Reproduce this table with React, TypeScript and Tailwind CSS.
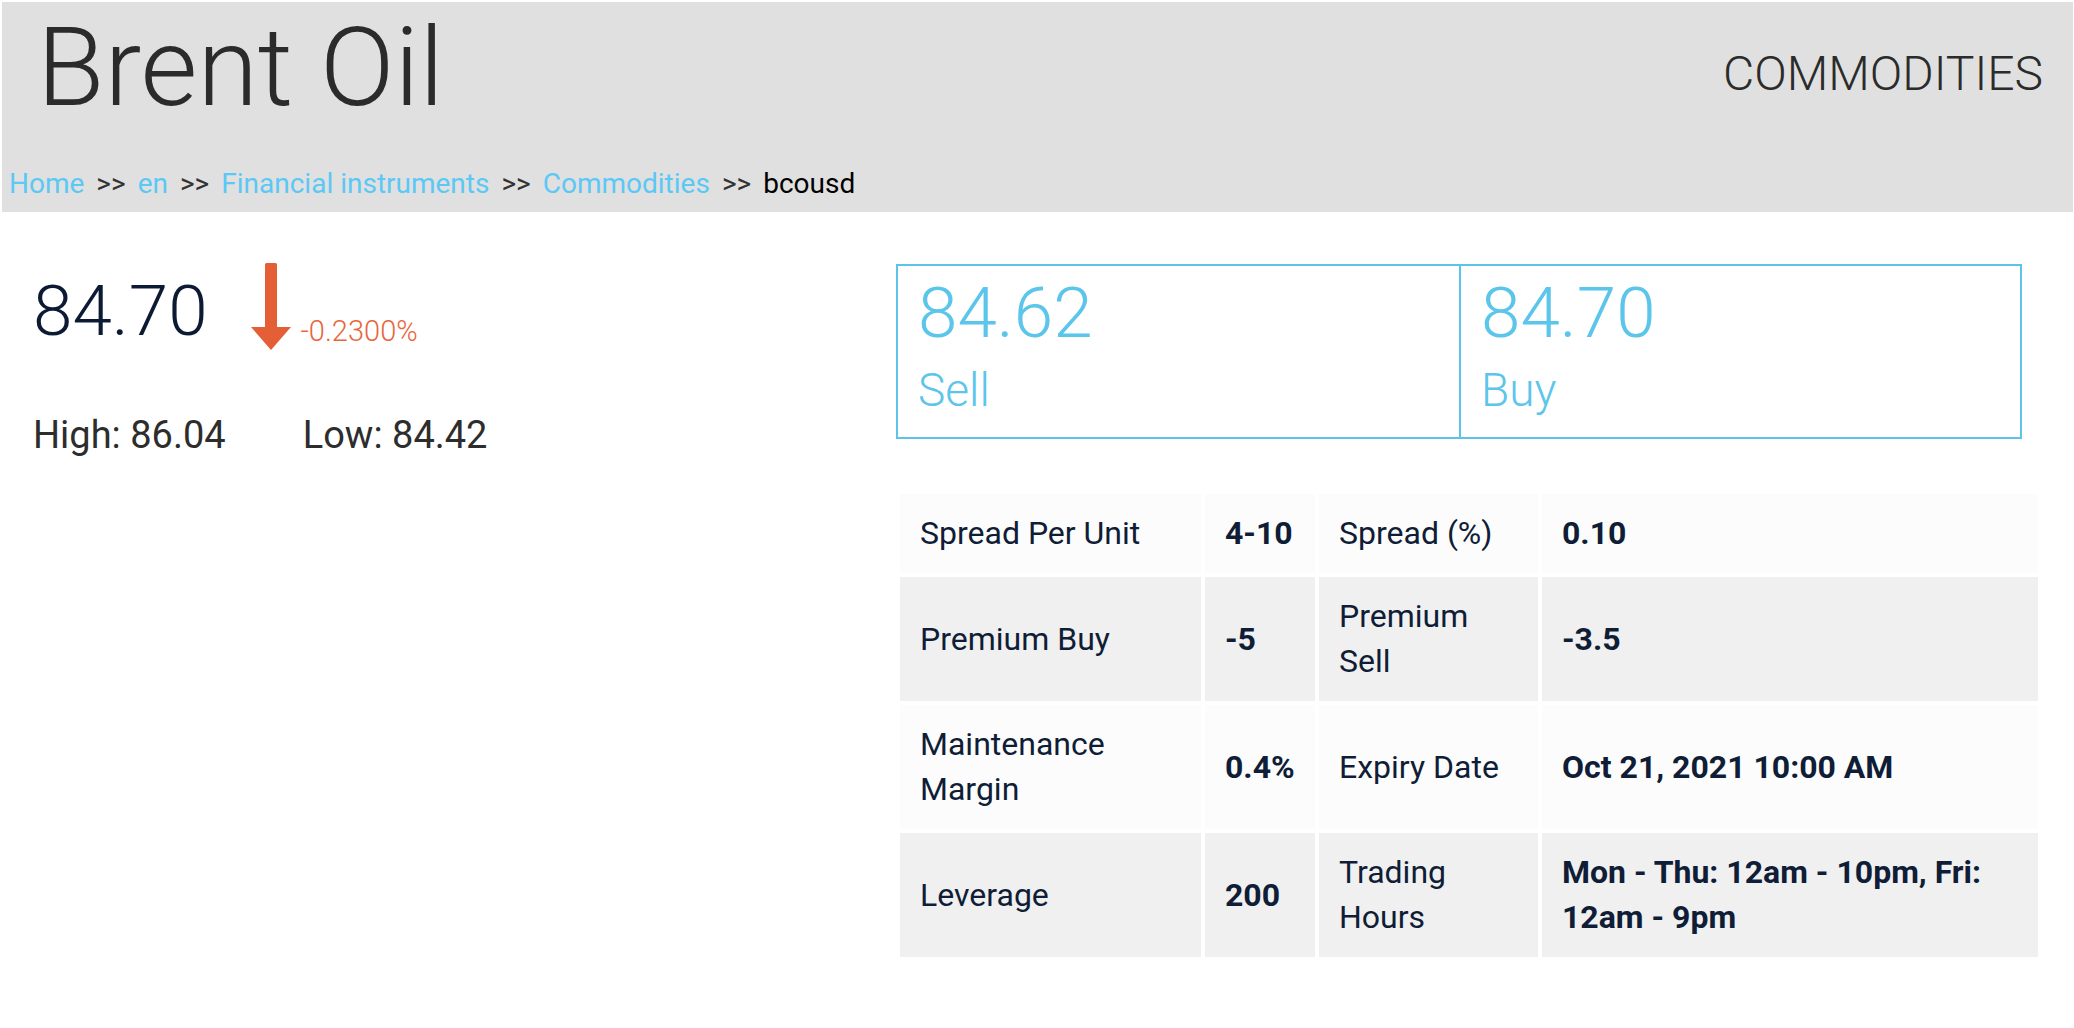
import React from "react";

const rows: [string, string, string, string][] = [
  ["Spread Per Unit", "4-10", "Spread (%)", "0.10"],
  ["Premium Buy", "-5", "Premium Sell", "-3.5"],
  ["Maintenance Margin", "0.4%", "Expiry Date", "Oct 21, 2021 10:00 AM"],
  ["Leverage", "200", "Trading Hours", "Mon - Thu: 12am - 10pm, Fri: 12am - 9pm"],
];

const crumbs = ["Home", "en", "Financial instruments", "Commodities"];

const DownArrow = () => (
  <svg width="40" height="88" viewBox="0 0 40 88" className="mt-[-12px] ml-[43px] shrink-0">
    <rect x="14" y="0" width="12" height="66" rx="1.5" fill="#e45f36" />
    <polygon points="0,64 40,64 20,87" fill="#e45f36" />
  </svg>
);

export default function App() {
  return (
    <div className="min-h-[1028px] bg-white font-['Roboto','Liberation_Sans',sans-serif]">
      <header className="ml-[2px] mr-px mt-[2px] flex h-[210px] flex-col bg-[#e0e0e0]">
        <div className="flex items-start justify-between">
          <h1 className="pl-[35px] pt-[11px] text-[110px] font-light leading-none text-[#2b2b2b]">Brent Oil</h1>
          <div className="pr-[30px] pt-[48px] text-[48px] font-light leading-none text-[#2b2b2b]">COMMODITIES</div>
        </div>
        <nav className="mb-[14px] mt-auto flex items-baseline gap-[12px] pl-[7px] text-[28px] leading-none">
          {crumbs.map((c) => (
            <React.Fragment key={c}>
              <a className="text-[#5bc8f5]">{c}</a>
              <span className="text-[#333333]">&gt;&gt;</span>
            </React.Fragment>
          ))}
          <span className="text-black">bcousd</span>
        </nav>
      </header>

      <main className="flex">
        {/* quote */}
        <section className="w-[896px] shrink-0 pl-[33px] pt-[63px]">
          <div className="flex items-start">
            <span className="text-[71px] font-light leading-none text-[#0d1a33]">84.70</span>
            <DownArrow />
            <span className="ml-[10px] mt-[42px] text-[29px] font-light leading-none text-[#e8663d]">-0.2300%</span>
          </div>
          <div className="mt-[65px] flex gap-[77px] text-[38px] leading-none text-[#2d2d2d]">
            <span>High: 86.04</span>
            <span>Low: 84.42</span>
          </div>
        </section>

        {/* sell / buy + details */}
        <section className="pt-[52px]">
          <div className="grid w-[1126px] grid-cols-2 border-2 border-[#5bc4e8] text-[#5bc5ea]">
            <div className="pb-[24px] pl-[20px] pt-[11px]">
              <div className="text-[71px] font-light leading-none">84.62</div>
              <div className="mt-[19px] text-[46px] font-light leading-none">Sell</div>
            </div>
            <div className="border-l-2 border-[#5bc4e8] pb-[24px] pl-[20px] pt-[11px]">
              <div className="text-[71px] font-light leading-none">84.70</div>
              <div className="mt-[19px] text-[46px] font-light leading-none">Buy</div>
            </div>
          </div>

          <table className="mt-[51px] table-fixed border-separate border-spacing-[4px] text-[32px] leading-[45px] text-[#0f1d36]">
            <colgroup>
              <col className="w-[301px]" />
              <col className="w-[110px]" />
              <col className="w-[219px]" />
              <col className="w-[496px]" />
            </colgroup>
            <tbody>
              {rows.map((r, i) => (
                <tr key={r[0]} className={i % 2 === 0 ? "bg-[#fcfcfc]" : "bg-[#f0f0f0]"}>
                  <td className="px-[20px] py-[17px]">{r[0]}</td>
                  <td className="px-[20px] py-[17px] font-bold">{r[1]}</td>
                  <td className="px-[20px] py-[17px]">{r[2]}</td>
                  <td className="px-[20px] py-[17px] font-bold">{r[3]}</td>
                </tr>
              ))}
            </tbody>
          </table>
        </section>
      </main>
    </div>
  );
}
